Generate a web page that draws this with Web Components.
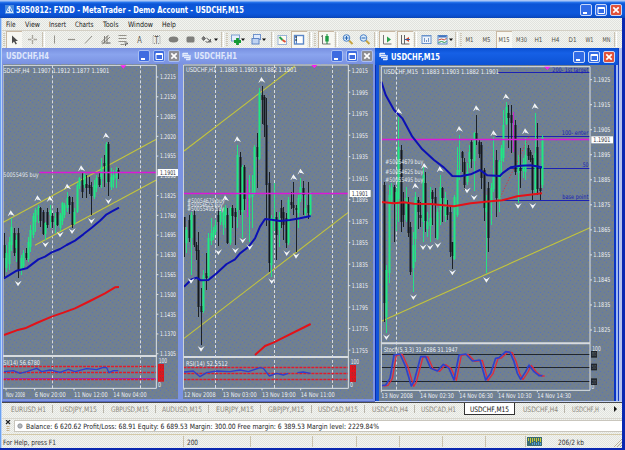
<!DOCTYPE html>
<html lang="en"><head><meta charset="utf-8"><title>MetaTrader</title>
<style>
html,body{margin:0;padding:0;overflow:hidden}
body{width:625px;height:450px;font-family:"DejaVu Sans Condensed","DejaVu Sans",sans-serif;background:#e7e8e4}
</style></head><body><mt-app></mt-app>
<script>
const FONT='font-family:"DejaVu Sans Condensed","DejaVu Sans",sans-serif;';
const define=(name,render)=>customElements.define(name,class extends HTMLElement{
  connectedCallback(){ if(!this.shadowRoot){this.attachShadow({mode:'open'}).innerHTML=render(this);} }
});

/* Single-line label stretched to a fixed width */
define('fit-text',el=>{
  const w=+el.getAttribute('w'),s=+(el.getAttribute('s')||8);
  return `<style>:host{display:block;flex:none;width:${w}px;height:12px}svg{display:block;overflow:visible}text{${FONT}font-size:${s}px;fill:currentColor}</style>
  <svg width="${w}" height="12"><text x="0" y="${6+s*.36}" textLength="${w}" lengthAdjust="spacingAndGlyphs">${el.textContent}</text></svg>`;
});

define('win-button',el=>{
  const k=el.getAttribute('kind'),off=el.hasAttribute('inactive');
  const g={min:'<rect x="3" y="8" width="4" height="2" fill="#fff"/>',
    max:'<path d="M3 3.5h6.5v6h-6.5zM3 4.5h6.5" stroke="#fff" fill="none"/>',
    close:'<path d="M3.3 3.3l5.4 5.4M8.7 3.3l-5.4 5.4" stroke="#fff" stroke-width="1.7" fill="none"/>'}[k];
  const c=k=='close'?(off?'#8d8d92':'#e0513a'):(off?'#3d6be0':'#326ce6');
  return `<style>:host{display:block;width:12px;height:12px}svg{display:block}</style><svg width="12" height="12"><rect x=".5" y=".5" width="11" height="11" rx="1.5" fill="${c}" stroke="${off?'#a9bff2':'#c9d8fa'}"/>${g}</svg>`;
});

define('mt-title',()=>`<style>
:host{display:flex;align-items:center;height:18px;box-sizing:border-box;padding:1px 3px 0 5px;color:#fff;font-weight:bold;background:linear-gradient(#a9c6f6 0,#a9c6f6 1px,#2d7bf0 2px,#0c55d6 4px,#0d58dc 13px,#0a4fce 16px,#0a44b4)}
svg{margin-right:2px}.b{margin-left:auto;display:flex;gap:3px}</style>
<svg width="9" height="9"><rect width="9" height="9" fill="#4a8ce0"/><path d="M4.5 1L8 7.5H1zM4.5 2v5M3 5l3 2" stroke="#e8f2ff" fill="none" stroke-width=".9"/></svg>
<fit-text w="228" s="8.6">5850812: FXDD - MetaTrader - Demo Account - USDCHF,M15</fit-text>
<div class="b"><win-button kind="min"></win-button><win-button kind="max"></win-button><win-button kind="close"></win-button></div>`);

define('mt-menu',()=>`<style>:host{display:flex;align-items:center;height:12px;padding-left:4px;gap:9.3px;color:#222;border-bottom:1px solid #d3cfc4}</style>`+
 [['File',9.5],['View',15],['Insert',17],['Charts',18.5],['Tools',15.5],['Window',25],['Help',14]].map(([t,w])=>`<fit-text w="${w}" s="7.4">${t}</fit-text>`).join(''));

const ICON={
 sep:'<path d="M-1.5 1v15" stroke="#cbc3b4"/><path d="M.5 1v15" stroke="#fff"/>',
 grip:'<path d="M0 2v13" stroke="#c5bba8" stroke-dasharray="1 1" stroke-width="1.5"/>',
 arrow:'<path d="M-2 4.5v8l2-2 1.6 3 1.3-.8-1.5-2.7H4z" fill="#4c4c4c"/>',
 cross:'<path d="M0 4v9M-4.5 8.5h9" stroke="#aaa79e" stroke-width="1.3"/><path d="M-1 8.5h2" stroke="#eee"/>',
 vline:'<path d="M0 4.5v8" stroke="#94928a"/>', hline:'<path d="M-3.500 8.500h7" stroke="#94928a" stroke-width="1.2"/>',
 slash:'<path d="M-3.500 12.500L3.500 5" stroke="#94928a"/>',
 chan:'<path d="M-4 11L3 4M-3 13L4.500 6M-1 5v7M1.500 5v8M-4 12h6" stroke="#77756e" stroke-width=".9"/><path d="M2 12h3" stroke="#555"/>',
 fibo:'<path d="M-4 4.500h8M-4 7.500h8M-4 10.500h8M-2 13.500h4" stroke="#94928a"/><path d="M2 12h3v1h-2v2" stroke="#666" fill="none"/>',
 ell:'<ellipse cx="0" cy="8.500" rx="4.800" ry="3" fill="#7e7e7b"/>', rrect:'<rect x="-4" y="5.500" width="8" height="6" rx="1.500" fill="#7e7e7b"/>',
 arrs:'<path d="M-4 5.500l2 2-2 2-1.500-2zM-1 7l5 4M0 11h3v-3M-2 10l2 2" stroke="#666" fill="#777"/>',
 drop:'<path d="M-2 7.500h4l-2 2.500z" fill="#111"/>',
 newc:'<rect x="-5" y="4" width="8" height="6" fill="#e6eefc" stroke="#7d9fd0"/><path d="M1 7v7M-2.500 10.500h7" stroke="#159a34" stroke-width="2.800"/>',
 prof:'<rect x="-3" y="3.500" width="7" height="5" fill="#dfeafc" stroke="#7093cc"/><rect x="-4.500" y="7.500" width="7" height="5.500" fill="#bfd3f2" stroke="#5e84c4"/>',
 nav:'<rect x="-4.500" y="4.500" width="8.500" height="9" fill="#fdfaf0" stroke="#9bb3d8"/><path d="M-3 6l3 3" stroke="#27a04c" stroke-width="2"/><path d="M0 9l3 2" stroke="#dc4e36" stroke-width="2"/>',
 term:'<rect x="-4.500" y="4.500" width="9" height="8.500" fill="#fff" stroke="#5b87c8" stroke-width="1.400"/><path d="M-2.500 5v8" stroke="#5b87c8"/><path d="M-4 6h2M-4 9h2" stroke="#222"/>',
 candle:'<path d="M-3.500 4v9h8M-3.500 4l-1 2" stroke="#777" fill="none"/><path d="M1 3v10" stroke="#138a37"/><rect x="-.7" y="5" width="3.400" height="5.500" fill="#1d9c43"/>',
 zin:'<path d="M1.500 9.500L5 13" stroke="#c7a33e" stroke-width="2"/><circle cx="-1" cy="7" r="3.300" fill="#d9eafa" stroke="#4c82c6"/><path d="M-3 7h4M-1 5v4" stroke="#2464b4"/>',
 zout:'<path d="M1.500 9.500L5 13" stroke="#c7a33e" stroke-width="2"/><circle cx="-1" cy="7" r="3.300" fill="#d9eafa" stroke="#4c82c6"/><path d="M-3 7h4" stroke="#2464b4"/>',
 scroll:'<path d="M-3.500 4v9h8" stroke="#777" fill="none"/><path d="M0 5.500l4 3-4 3z" fill="#2ba34d"/>',
 shift:'<path d="M-3.500 4v9h8M-.500 4v9" stroke="#666" fill="none"/><path d="M4 6l-4 2.500 4 2.500z" fill="#cd4b32"/><path d="M0 8.500h5" stroke="#3a58a0"/>',
 ind:'<rect x="-4.500" y="4.500" width="9" height="8" fill="#eef4fd" stroke="#6992cc"/><path d="M-4 5h8" stroke="#6992cc"/><path d="M-2 11v-4M0 11v-2M2 11v-4" stroke="#7898c4"/>',
 tmpl:'<rect x="-4.500" y="4.500" width="9" height="8.500" fill="#eef4fd" stroke="#5b87c8"/><path d="M-4 5.500h8" stroke="#4374bf" stroke-width="2"/><path d="M-4 9l3-1 3 1 2-2" stroke="#c9482e" fill="none"/><path d="M-4 11.500l3-1 3 1 2-1" stroke="#279848" fill="none"/>'
};
define('tool-button',el=>{
  const i=el.getAttribute('icon'),t=el.getAttribute('label'),w=+el.getAttribute('w'),p=el.hasAttribute('pressed');
  const tw=t&&t.length==3?11:t=='A'?4.5:t=='T'?4:8;
  const big=t=='A'||t=='T';
  const body=t?`<text y="${big?11.5:11}" x="${-tw/2}" textLength="${tw}" lengthAdjust="spacingAndGlyphs" style="font-size:${big?8:6.4}px;${FONT}" fill="#55534c">${t}</text>${t=='T'?'<rect x="-3.500" y="4.500" width="7" height="8" fill="none" stroke="#999" stroke-dasharray="1 1"/>':''}`:ICON[i];
  return `<style>:host{display:block;flex:none;box-sizing:border-box;width:${w}px;height:18px;${p?'background:#f7f7f2;box-shadow:inset 1px 1px #c9b8a2;':''}}svg{display:block;overflow:visible}</style><svg width="${w}" height="17" viewBox="${-w/2} 0 ${w} 17">${body}</svg>`;
});
const TOOLS=[['grip',4],['arrow',14,1],['cross',32],['sep',44],['vline',54],['hline',71],['slash',88],['chan',105],['fibo',122],['#A',139],['#T',156],['ell',173],['rrect',190],['arrs',207],['drop',216],['sep',223],['grip',227],['newc',236],['drop',243],['prof',256],['drop',264],['sep',273],['nav',282],['term',299,1],['sep',311],['grip',315],['candle',326,1],['sep',337],['zin',347],['zout',364],['sep',376],['scroll',387,1],['shift',405,1],['sep',416],['ind',426],['tmpl',442],['drop',451],['sep',457],['grip',461],['#M1',469.5],['#M5',486.5],['#M15',504,1],['#M30',521],['#H1',538],['#H4',555],['#D1',572],['#W1',589.5],['#MN',606],['sep',616]];
define('mt-toolbar',()=>{
  let edge=2,out='';
  for(const [i,c,p] of TOOLS){
    const w=/sep|grip|drop/.test(i)?4:p?16:13,l=c-w/2;
    out+=`<tool-button style="margin-left:${l-edge}px" w="${w}" ${p?'pressed':''} ${i[0]=='#'?`label="${i.slice(1)}"`:`icon="${i}"`}></tool-button>`; edge=l+w;
  }
  return `<style>:host{display:flex;height:17px;align-items:flex-start}</style>${out}`;
});

/* Price chart. Drawing units are thirds of a pixel, relative to (ox, 45) on the page. */
const CH={
 h4:{x:3,y:64,w:175,h:335,ox:0,L:9,R:469,T:61,D:933,B:1030,head:['SDCHF,H4  1.1907 1.1912 1.1877 1.1901',10,318,77],
  seps:[157,421],price:[382,118],tri:[370,61],
  axis:{v:12215,step:65,n:15,y:96,dy:59.3,x:480,w:48},
  yel:['10,532 469,283','105,601 469,405'],
  blue:'12,700 50,677 80,670 115,643 135,635 155,622 180,612 200,600 225,587 250,568 275,548 300,527 320,508 340,497 357,488',
  red:'12,870 50,856 75,850 110,834 155,815 190,803 225,790 270,768 315,745 345,727 357,726',
  up:'33,505 113,460 150,462 202,425 244,370 318,272',dn:'54,715 136,598 180,568 216,558 274,527 325,468',
  orders:[['50055495 buy',10,106,388]],
  ind:['SI(14) 56.6780',10,110,953],levels:[964,983,1003],purple:1000,boxes:'red',bx:[474,957,53],n100:[476,947],n0:[474,1019],
  osc:'12,980 40,977 60,985 80,980 110,970 125,980 150,975 180,982 205,973 225,980 260,971 290,974 310,967 320,968 327,983 340,977 355,977',
  dates:[['Nov 2008',18,57],['6 Nov 20:00',104,93],['11 Nov 12:00',222,101],['14 Nov 04:00',340,100]],dy:1048,
  c:'12k563,700,600,640 18g600,680,625,670 27g575,675,590,655 34g520,620,545,600 42k550,635,565,625 49g570,650,585,610 56k550,700,565,675 63g630,690,640,675 71g615,670,625,665 78k610,645,625,640 85g575,650,590,640 92g540,620,555,605 99g505,580,512,570 107g488,560,495,530 114g480,535,487,510 121k485,545,490,530 129k495,570,500,565 136g530,585,535,568 143k490,550,500,540 151g480,550,495,510 158k505,550,512,530 165g505,565,520,540 172k490,545,500,540 180g505,560,510,550 187g470,540,475,530 194g475,520,480,510 202g440,500,460,490 209k452,505,455,480 217k455,548,470,540 224g490,540,500,535 232g415,505,420,500 239g395,430,400,425 246k385,460,405,440 253g385,430,390,420 260k390,460,418,430 267k395,445,420,430 275k410,510,425,452 282g405,462,420,455 290g390,440,400,430 297k380,425,395,420 305g340,430,365,400 312k330,425,355,365 319g290,412,298,385 326k292,455,298,412 334g370,435,395,425 341g375,430,390,405 348g366,430,375,400 355k370,403,375,383'},
 h1:{x:183,y:64,w:190,h:335,ox:180,L:10,R:505,T:60,D:936,B:1030,head:['USDCHF,H1  1.1883 1.1903 1.1882 1.1901',18,332,74],
  seps:[107,283,458],price:[445,12],tri:[403,60],
  axis:{v:12015,step:20,n:14,y:77,dy:64.5,x:515,w:49},
  yel:['12,318 345,63','12,880 505,502'],
  blue:'12,725 35,703 50,698 62,706 85,705 110,685 140,657 165,643 180,625 205,606 225,580 240,545 255,522 275,524 300,528 330,525 360,520 392,513',
  red:'225,930 255,903 280,893 392,837',
  up:'245,105 172,283 136,460 341,397 362,380',dn:'33,707 115,621 166,616 188,586 209,606 320,624 348,632 275,708 63,911',
  orders:[['#50054679 buy',22,112,467],['#50054625 buy',22,106,478],['#50055495 buy',22,110,491]],
  ind:['RSI(14) 52.5512',18,125,957],levels:[968,985,1004],boxes:'red',bx:[510,960,51],n100:[512,951],n0:[510,1019],
  osc:'12,981 40,978 60,995 80,983 110,978 150,980 180,975 205,980 240,968 250,970 268,993 290,985 310,990 325,985|352,983 370,981 392,985',
  dates:[['12 Nov 2008',12,95],['13 Nov 03:00',128,102],['13 Nov 19:00',246,101],['14 Nov 11:00',362,102]],dy:1048,
  c:'13k515,635,515,545 19g545,622,555,595 27k510,590,525,580 34g500,690,510,580 42k495,605,510,600 49k590,645,600,618 56k560,815,615,785 64k730,900,783,800 71g675,803,690,797 78k625,735,685,700 85g565,705,580,695 93g520,600,565,590 100g545,585,555,575 107g525,570,540,562 114k490,605,510,530 121g490,540,500,530 129g485,570,500,540 136g480,550,490,515 143k490,598,510,595 150g485,600,490,595 158k480,550,490,515 165k490,600,500,515 172g300,550,330,495 180k320,510,335,495 187g360,580,365,500 194k360,495,365,460 202m405,515,430,440 209g390,590,445,460 216g390,550,440,455 224g300,450,305,445 232k265,430,305,335 239g130,345,140,340 246k122,235,150,165 253k150,275,155,240 260k160,545,240,420 267k380,680,415,655 275g510,695,520,660 282g415,560,520,530 289k500,645,515,570 297g500,605,525,555 304k465,550,490,520 311k485,585,500,540 319k505,610,520,595 326g455,600,465,595 333k440,490,470,480 340k410,510,480,490 348k480,620,490,495 355g450,550,460,505 362g398,470,425,460 370k408,510,430,450 377g450,515,490,505 385k410,520,480,505 392g440,515,445,508'},
 m15:{x:379,y:65,w:235,h:336,ox:374,L:22,R:648,T:65,D:895,B:1036,head:['USDCHF,M15  1.1883 1.1903 1.1882 1.1901',29,346,80],
  seps:[67],price:[284,22],tri:[520,65],
  axis:{v:11925,step:10,n:11,y:104,dy:75.1,x:658,w:51},
  yel:['22,829 648,548'],
  blue:'22,110 35,150 60,195 85,220 115,275 145,313 180,345 210,368 235,393 260,394 290,388 318,375 340,391 378,393 385,385 410,367 440,362 470,361 504,367',
  red:'22,471 60,475 90,472 120,476 170,477 240,484 290,475 350,469 385,466 430,454 504,445',
  up:'74,199 151,363 124,423 198,373 256,252 307,190 359,265 396,155 454,259 483,184',
  dn:'279,436 300,457 432,482 476,482 37,876 118,756 147,606 168,606 191,600 235,682 337,704',
  orders:[['#50054679 buy',34,114,350],['#50054625 buy',34,114,381],['#50055495 buy',34,114,403]],
  targets:[['200- 1st target',82,372,108],['100- enter',273,365,80],['50',370,400,17],['base point',466,365,78]],
  ind:['Stoch(5,3,3) 31.4286 31.1947',29,222,915],levels:[927,967,1010],boxes:'#20262e',bx:[651,919,18],n100:[655,910],n0:[652,1024],
  osc:'22,1022 35,1020 48,1000 60,930 78,927 95,965 112,1023 120,1010 140,935 155,935 170,970 190,978 208,958 225,970 240,1005 255,930 275,927 295,948 318,945 335,1005 350,985 365,940 375,938 395,920 408,922 420,950 430,985 440,1003 455,980 465,960 480,980 495,992 505,992',
  dates:[['13 Nov 2008',22,95],['14 Nov 02:30',138,102],['14 Nov 06:30',256,101],['14 Nov 10:30',372,101],['14 Nov 14:30',490,101]],dy:1053,
  c:'30k410,830,420,775 37g660,865,675,815 45g420,715,450,685 52g415,475,425,465 60k420,590,425,470 67g430,560,440,470 74g215,530,305,460 81k300,560,315,530 89k440,545,470,510 96g425,530,460,525 103k455,575,475,565 110k530,690,545,680 117g560,740,600,670 125g440,650,455,580 132k455,550,465,500 139k470,545,510,520 147g365,590,390,530 154k380,560,415,530 161g500,575,530,550 169g425,590,520,545 176k435,540,440,460 183k430,580,455,480 191g490,585,500,580 198g390,540,425,495 206k425,530,430,460 213g440,530,460,515 220k465,525,485,510 228k480,635,500,620 235k590,670,590,632 242g450,645,455,640 249g305,515,375,510 257g270,405,375,380 264k318,380,322,340 271k340,435,350,418 279g355,420,380,410 286g300,370,320,350 293k285,370,290,340 300g262,440,265,350 307k210,300,265,283 315k285,340,290,325 322k290,430,300,400 330k370,530,375,490 337g450,685,470,500 344k410,620,430,580 352g415,540,430,470 359g275,440,395,430 367k315,515,345,460 375g345,500,350,465 382g300,395,310,350 389g195,350,240,340 396g170,240,185,235 404k180,310,205,220 411k180,325,210,235 418m200,320,205,300 425k225,390,240,380 432g330,475,360,385 440k310,430,370,380 447g340,400,355,380 454g280,405,330,380 462k300,345,310,335 469k315,350,320,345 476k330,465,340,435 483g205,445,325,440 491k235,450,305,430 498k370,465,430,440 505g270,430,275,420'}
};
const txt=(s,x,w,y,fill='#eef1f4',size=20)=>`<text x="${x}" y="${y+7}" textLength="${w}" lengthAdjust="spacingAndGlyphs" font-size="${size}" fill="${fill}" xml:space="preserve">${s}</text>`;
const line=(p,c,w=3,x='')=>`<polyline points="${p}" stroke="${c}" stroke-width="${w}" fill="none" ${x}/>`;
define('mt-chart',el=>{
  const d=CH[el.getAttribute('data')],A=d.axis;let s='';
  const px=v=>Math.round(v/3)*3;
  const snap=(x1,y1,x2,y2,c,x='',w=3)=>line(x1==x2?`${px(x1-1.5)+1.5},${y1} ${px(x1-1.5)+1.5},${y2}`:`${x1},${px(y1-1.5)+1.5} ${x2},${px(y1-1.5)+1.5}`,c,w,x);
  for(const x of d.seps) s+=snap(x,d.T,x,d.B,'#d5dae0','stroke-dasharray="9 6"');
  s+=d.yel.map(p=>line(p,'#c3c43c',3.3)).join('');
  for(const [t,y,x,w] of d.targets||[]) s+=snap(x,y,d.R,y,'#1c22b4')+txt(t,643-w,w,y<90?74:y-10,'#1a1fb0',19);
  if(d.targets) s+=line('375,465 465,275','#d23c3c',3,'stroke-dasharray="4 5"');
  for(const m of d.c.matchAll(/(\d+)([gkm])(\d+),(\d+),(\d+),(\d+)/g)){
    const [,x,k,h,l,a,b]=m,c={g:'#1fe884',k:'#15191e',m:'#d41cd0'}[k],X=px(+x-1.5);
    s+=`<rect x="${X}" y="${px(+h)}" width="3" height="${px(l-h)}" fill="${c}" opacity=".92"/>`;
    if(k!='m') s+=`<rect x="${X-1.5}" y="${px(+a)}" width="6" height="${Math.max(3,px(b-a))}" fill="${c}"/>`;
  }
  s+=snap(d.price[1],d.price[0],d.R,d.price[0],'#dc18d8','',4.2);
  s+=line(d.red,'#e31218',6)+line(d.blue,'#0c10b4',6);
  s+=d.up.split(' ').map(p=>`<path transform="translate(${p})" d="M-10 9L-1-9L11 8L3 4L-2 4L-1-1L-5 5z" fill="#f4f6f8"/>`).join('');
  s+=d.dn.split(' ').map(p=>`<path transform="translate(${p})" d="M-10-8L0 9L11-8L3-3L1-1L-5-4z" fill="#f4f6f8"/>`).join('');
  s+=d.orders.map(o=>txt(o[0],o[1],o[2],o[3],'#e6eaee',19)).join('');
  s+=txt(...d.head);
  const ol=d.targets?'#20262e':'#e01c2c';
  d.levels.forEach(y=>s+=snap(d.L,y,d.R,y,ol,d.targets?'':'stroke-dasharray="9 3"',d.targets?3:4));
  if(d.purple) s+=snap(d.L,d.purple,d.R,d.purple,'#a02ca8');
  if(d.targets) s+=`<g transform="translate(7 1)">${line(d.osc,'#e02a3c',4)}</g>`;
  s+=d.osc.split('|').map(p=>line(p,'#2f40cc',d.targets?5:4)).join('')+txt(...d.ind);
  s+=line(`${d.L},${d.B} ${d.L},${d.T} ${d.R},${d.T} ${d.R},${d.B} ${d.L},${d.B}`,'#dde1e5',3)+line(`${d.L},${d.D} ${d.R},${d.D}`,'#d7dbdf',6);
  s+=`<path d="M${d.tri[0]-9} ${d.tri[1]}h18l-9 10z" fill="#f820f0"/>`;
  for(let i=0;i<A.n;i++){const y=A.y+i*A.dy,v=((A.v-i*A.step)/10000).toFixed(4);
    s+=line(`${d.R},${y} ${d.R+6},${y}`,'#dde1e5');s+=txt(v,A.x,A.w,y,'#f0f2f4',19.5);}
  s+=`<rect x="${d.R+4}" y="${d.price[0]-10}" width="${A.w+14}" height="21" fill="#fff"/>`+txt('1.1901',A.x,A.w,d.price[0],'#30343a',19.5);
  s+=txt('100',d.n100[0],25,d.n100[1])+txt('0',d.n0[0],9,d.n0[1]);
  const [bx,by,bh]=d.bx;
  if(d.targets) [['80',927],['50',965],['20',1009]].forEach(([t,y])=>s+=`<rect x="${bx}" y="${y-9}" width="18" height="20" fill="#20262e"/>`+txt(t,bx+2,14,y,'#606870',16));
  else s+=`<rect x="${bx}" y="${by}" width="18" height="${bh}" fill="#e3141c"/>`+[['70',by+9],['50',by+26],['30',by+43]].map(([t,y])=>txt(t,bx+2,14,y,'#9c3038',16)).join('');
  for(const [t,x,w] of d.dates) s+=line(`${x},${d.B} ${x},${d.B+6}`,'#dde1e5')+txt(t,x,w,d.dy);
  return `<style>:host{display:block;width:${d.w}px;height:${d.h}px;overflow:hidden;background:#708090}svg{display:block}text{${FONT}}</style>
  <svg width="${d.w}" height="${d.h}" viewBox="${(d.x-d.ox)*3} ${(d.y-45)*3} ${d.w*3} ${d.h*3}"><defs><pattern id="p" width="24" height="24" patternUnits="userSpaceOnUse"><path d="M0 4.500h3M12 10.500h3M6 19.500h3M18 22.500h3" stroke="#5870c0" stroke-width="3"/><path d="M18 4.500h3M3 13.500h3" stroke="#85807a" stroke-width="3"/></pattern></defs>
  <rect x="-9" y="0" width="760" height="1200" fill="url(#p)" opacity=".85"/><g stroke-linejoin="round">${s}</g></svg>`;
});

define('mt-window',el=>{
  const a=el.hasAttribute('active'),h4=el.getAttribute('kind')=='h4';
  return `<style>:host{display:flex;flex-direction:column;flex:none;box-sizing:border-box;height:354px;background:${a?'linear-gradient(90deg,#0a2cb0 1px,#1253d8 1px 239px,#0c35c4 239px 241px,#9db8f4 241px 243px,#1238c0 243px 244px,#b4c2ee 244px)':'#7b93e2'};border-bottom:1px solid ${a?'#c4d3f6':'#5568c0'}}
  header{display:flex;align-items:center;height:${a?17:16}px;flex:none;box-sizing:border-box;padding:0 ${a?3:h4?0:2}px 0 ${h4?4:a?4:2}px;font-weight:bold;color:${a?'#fff':'#dfe6fb'};background:${a?'linear-gradient(#0b4fd0,#1660e6 30%,#0c52d4)':'linear-gradient(#7890e0,#8aa4ee 40%,#7a92e2)'};${a?'margin-right:4px;':''}}
  .b{margin-left:auto;display:flex;gap:3px}svg{flex:none;margin-right:3px}</style>
  <header>${h4?'':'<svg width="9" height="9"><path d="M1 1.500h5M1 3.500h6M2 5.500h6M4 7.500h4M1 1v4M8 3v5" stroke="#e4ecfc" stroke-width="1.300"/></svg>'}<slot name="title"></slot><div class="b">${['min','max','close'].map(k=>`<win-button kind="${k}" ${a?'':'inactive'}></win-button>`).join('')}</div></header><slot></slot>`;
});

define('mt-tabs',()=>{
  const T=[['EURUSD,H1',11,35],['USDJPY,M15',60,37],['GBPUSD,M15',111,38],['AUDUSD,M15',162,40],['EURJPY,M15',215.500,38],['GBPJPY,M15',268,36.500],['USDCAD,M15',318,40],['USDCAD,H4',371.500,36],['USDCAD,H1',421,35],['USDCHF,M15',470,39],['USDCHF,H4',523,35],['USDCHF,H',572,27]];
  let e=2,s='';
  T.forEach(([t,x,w],i)=>{const on=i==9,l=on?x-6:x,n=T[i+1];
    s+=`<span class="${on?'on':''}" style="margin-left:${l-e}px"><fit-text w="${w}" s="7.500">${t}</fit-text></span>`;e=on?x+w+6:x+w;
    if(n&&!on&&i!=8){s+='<i></i>';e+=7;}});
  return `<style>:host{display:flex;height:15px;align-items:flex-start;border-top:1px solid #4a4a4a;color:#8b877c}span{display:block;height:11px}i{width:1px;height:8px;background:#b9b5a9;margin:2px 0 0 6px}
  .on{background:#fff;color:#111;border:solid #333;border-width:0 1px 1px;padding:0 5px}svg{margin-left:auto;margin-right:4px}</style>${s}<svg width="18" height="12"><path d="M5 4v4L3 6z" fill="#999"/><path d="M14 3v6l3-3z" fill="#111"/></svg>`;
});
define('mt-terminal',()=>`<style>:host{display:flex;height:16px;padding:1px 0 2px 3px;box-sizing:border-box;gap:3px;border-top:1px solid #d8d6ce}
.p{flex:1;background:#fff;border:1px solid #c9c6bd;border-right:0;display:flex;align-items:center;padding-left:2px;color:#222;gap:3px}</style>
<svg width="6" height="13"><path d="M1 0l4 4M5 0L1 4" stroke="#222" stroke-width="1.200"/><path d="M1.500 6.500h3M1.500 8.500h3M1.500 10.500h3" stroke="#c8b38e"/></svg>
<div class="p"><svg width="6" height="6"><circle cx="3" cy="3" r="2.200" fill="#b5b8bd" stroke="#858a90" stroke-width=".8"/></svg><fit-text w="353" s="7.300">Balance: 6 620.62  Profit/Loss: 68.91  Equity: 6 689.53  Margin: 300.00  Free margin: 6 389.53  Margin level: 2229.84%</fit-text></div>`);
define('mt-status',()=>`<style>:host{display:flex;align-items:center;height:13px;color:#333;border-top:1px solid #d3c9a8}i{width:1px;height:11px;background:#c9c1ac}.g{flex:none}</style>
<fit-text style="margin-left:1px" w="53" s="7.300">For Help, press F1</fit-text><i style="margin-left:127px"></i><fit-text style="margin-left:3px" w="11" s="7.300">200</fit-text>
<i style="margin-left:52px"></i><i style="margin-left:61px"></i><i style="margin-left:43px"></i><i style="margin-left:42px"></i><i style="margin-left:42px"></i><i style="margin-left:42px"></i><i style="margin-left:39px"></i>
<svg class="g" style="margin-left:1px" width="15" height="9"><rect width="15" height="9" fill="#3b6a70"/><path d="M1.500 1v3M3.500 1v5M5.500 1v4M7.500 1v3M9.500 1v4M11.500 1v3M13.500 1v4" stroke="#c9cc36"/><path d="M5.500 6v2M7.500 5v3M9.500 6v2M11.500 5v3M13.500 6v2" stroke="#55a0d8"/></svg>
<fit-text style="margin-left:16px" w="26" s="7.300">206/2 kb</fit-text>
<svg style="margin-left:auto" width="10" height="10"><path d="M2 10L10 2M5 10L10 5M8 10L10 8" stroke="#b5ae9a"/></svg>`);

define('mt-app',()=>`<style>
:host{display:flex;flex-direction:column;width:625px;height:450px;box-sizing:border-box;background:#0a28b0}
.client{display:flex;flex-direction:column;flex:none;height:430px;margin:0 3px 0 0;padding-left:2px;background-color:#e9eae6;
background-image:linear-gradient(90deg,#6aa2f2 1px,#bcd3f7 1px,#bcd3f7 2px,transparent 2px),conic-gradient(#f3f4ef 25%,#e1e3df 0 50%,#f3f4ef 0 75%,#e1e3df 0);background-size:100% 100%,2px 2px;background-repeat:no-repeat,repeat}
.mdi{display:flex;height:354px;align-items:flex-start;overflow:hidden;background:#7b93e2}
mt-status{flex:1}
.h4{width:178px}.h1{width:195px}.m15{width:247px}
.h4 mt-chart{margin-left:1px}.h1 mt-chart{margin-left:3px}.m15 mt-chart{margin-left:4px}
</style>
<mt-title></mt-title>
<div class="client"><mt-menu></mt-menu><mt-toolbar></mt-toolbar>
<div class="mdi">
<mt-window class="h4" kind="h4"><fit-text slot="title" w="43" s="8.300">USDCHF,H4</fit-text><mt-chart data="h4"></mt-chart></mt-window>
<mt-window class="h1"><fit-text slot="title" w="43" s="8.300">USDCHF,H1</fit-text><mt-chart data="h1"></mt-chart></mt-window>
<mt-window class="m15" active><fit-text slot="title" w="49" s="8.300">USDCHF,M15</fit-text><mt-chart data="m15"></mt-chart></mt-window>
</div>
<mt-tabs></mt-tabs><mt-terminal></mt-terminal><mt-status></mt-status></div>`);
</script></body></html>
